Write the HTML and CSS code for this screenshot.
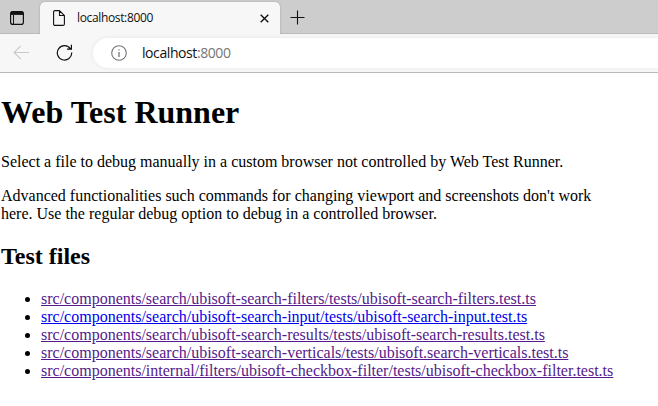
FILE: index.html
```html
<!DOCTYPE html>
<html lang="en">
<head>
<meta charset="utf-8">
<title>localhost:8000</title>
<link rel="stylesheet" href="styles.css">
</head>
<body>
<header class="tabstrip">
  <div class="actions">
    <svg width="14" height="14" viewBox="0 0 14 14" fill="none" stroke="#111"><rect x=".6" y=".6" width="12.8" height="12.8" rx="2.2" stroke-width="1.2"/><path d="M1 2.2h12" stroke-width="3.4"/><path d="M3.5 3v10" stroke-width="1"/></svg>
  </div>
  <div class="tab">
    <svg class="page-icon" width="12" height="16" viewBox="0 0 12 16" fill="none" stroke="#111" stroke-width="1.1"><path d="M2 .6h4.4l5 5V14a1.4 1.4 0 0 1-1.4 1.4H2A1.4 1.4 0 0 1 .6 14V2A1.4 1.4 0 0 1 2 .6zM6.5 .8v4.7h4.7"/></svg>
    <span class="tab-title">localhost:8000</span>
    <svg class="close" width="9" height="9" viewBox="0 0 9 9" stroke="#111" stroke-width="1.4"><path d="M.7.7l7.6 7.6M8.3.7L.7 8.3"/></svg>
  </div>
  <svg class="plus" width="15" height="15" viewBox="0 0 15 15" stroke="#111" stroke-width="1.1"><path d="M7.5.5v14M.5 7.5h14"/></svg>
</header>
<nav class="toolbar">
  <svg class="back" width="17" height="15" viewBox="0 0 17 15" fill="none" stroke="#c9c9c9" stroke-width="1.1"><path d="M16 7.5H.8M7.8.9L1 7.5l6.8 6.6"/></svg>
  <svg class="reload" width="17" height="17" viewBox="0 0 17 17" fill="none" stroke="#111" stroke-width="1.2"><path d="M15.7 8.5A7.2 7.2 0 1 1 14.5 4.9M15.4.8v4.4H11"/></svg>
  <div class="address">
    <svg width="16" height="16" viewBox="0 0 16 16" fill="none" stroke="#757575" stroke-width="1.1"><circle cx="8" cy="8" r="7.3"/><path d="M8 7v5M8 4.2v1.3" stroke-width="1.3"/></svg>
    <span class="url">localhost<span class="port">:8000</span></span>
  </div>
</nav>
<main class="content">
  <h1>Web Test Runner</h1>
  <p>Select a file to debug manually in a custom browser not controlled by Web Test Runner.</p>
  <p>Advanced functionalities such commands for changing viewport and screenshots don't work<br>here. Use the regular debug option to debug in a controlled browser.</p>
  <h2>Test files</h2>
  <ul>
    <li><a class="seen" href="#f1">src/components/search/ubisoft-search-filters/tests/ubisoft-search-filters.test.ts</a></li>
    <li><a href="#f2">src/components/search/ubisoft-search-input/tests/ubisoft-search-input.test.ts</a></li>
    <li><a class="seen" href="#f3">src/components/search/ubisoft-search-results/tests/ubisoft-search-results.test.ts</a></li>
    <li><a class="seen" href="#f4">src/components/search/ubisoft-search-verticals/tests/ubisoft.search-verticals.test.ts</a></li>
    <li><a class="seen" href="#f5">src/components/internal/filters/ubisoft-checkbox-filter/tests/ubisoft-checkbox-filter.test.ts</a></li>
  </ul>
</main>
</body>
</html>
```
FILE: styles.css
```css
* { box-sizing: border-box; }
body { margin: 0; background: #fff; overflow: hidden; }
svg { display: block; flex: none; }
.tabstrip {
  display: flex;
  height: 34px;
  background: #cdcdcd;
  border-bottom: 1px solid #bababa;
}
.actions { width: 40px; padding: 11px 0 0 10px; }
.tab {
  display: flex;
  align-items: center;
  width: 240px;
  height: 32px;
  margin-top: 2px;
  padding: 0 11px 0 13px;
  background: #f7f7f7;
  border-radius: 5px 5px 0 0;
  box-shadow: 0 0 2px #999;
  clip-path: inset(-2px -2px 0 -2px);
}
.tab-title {
  margin-left: 12px;
  font: 12px/16px "Open Sans", "Noto Sans", sans-serif;
  letter-spacing: -.35px;
  color: #111;
}
.close { margin-left: auto; }
.plus { margin: 10px 0 0 10px; }
.toolbar {
  display: flex;
  align-items: center;
  height: 39px;
  padding-left: 13px;
  background: #f7f7f7;
  border-bottom: 1px solid #bababa;
}
.back { margin-bottom: 2px; }
.reload { margin: 0 0 1px 26px; }
.address {
  display: flex;
  flex: 1;
  align-items: center;
  height: 30px;
  margin-left: 20px;
  padding-left: 18px;
  background: #fff;
  border-radius: 15px 0 0 15px;
  box-shadow: 0 0 4px #e6e6e6;
}
.url {
  margin-left: 15px;
  font: 14px/18px "Open Sans", "Noto Sans", sans-serif;
  letter-spacing: -.42px;
  color: #111;
}
.port { color: #767676; }
.content {
  padding: 21px 0 0 1px;
  font: 16px/18px "Liberation Serif", "Times New Roman", serif;
  color: #000;
  white-space: nowrap;
}
h1 { margin: 0 0 22px; font-size: 32px; line-height: 37px; }
p { margin: 0 0 16px; }
h2 { margin: 20px 0; font-size: 24px; line-height: 27px; }
ul { margin: 0; padding-left: 40px; }
a { color: #00e; text-decoration: underline; }
.seen { color: #551a8b; }
```
